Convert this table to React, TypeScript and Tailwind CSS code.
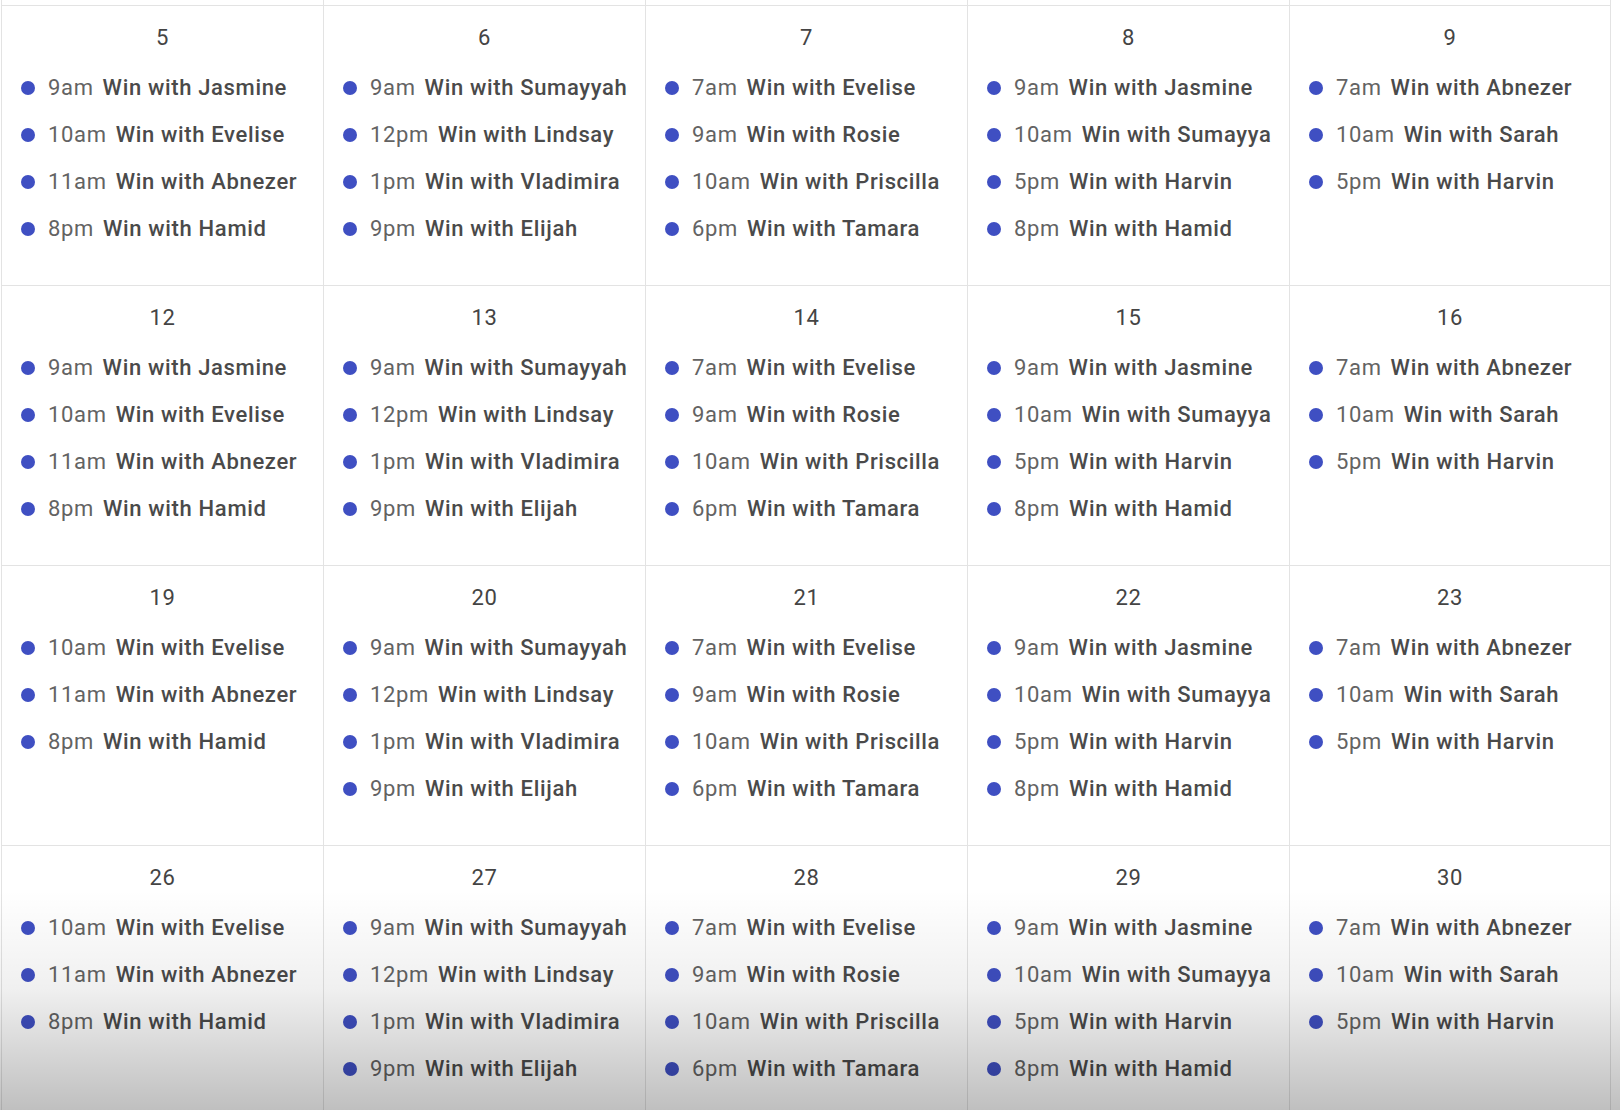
const col1a = [
  { time: "9am", name: "Jasmine" },
  { time: "10am", name: "Evelise" },
  { time: "11am", name: "Abnezer" },
  { time: "8pm", name: "Hamid" },
];
const col1b = col1a.slice(1);
const col2 = [
  { time: "9am", name: "Sumayyah" },
  { time: "12pm", name: "Lindsay" },
  { time: "1pm", name: "Vladimira" },
  { time: "9pm", name: "Elijah" },
];
const col3 = [
  { time: "7am", name: "Evelise" },
  { time: "9am", name: "Rosie" },
  { time: "10am", name: "Priscilla" },
  { time: "6pm", name: "Tamara" },
];
const col4 = [
  { time: "9am", name: "Jasmine" },
  { time: "10am", name: "Sumayya" },
  { time: "5pm", name: "Harvin" },
  { time: "8pm", name: "Hamid" },
];
const col5 = [
  { time: "7am", name: "Abnezer" },
  { time: "10am", name: "Sarah" },
  { time: "5pm", name: "Harvin" },
];

type Ev = { time: string; name: string };

const weeks: { day: number; events: Ev[] }[][] = [
  [
    { day: 5, events: col1a },
    { day: 6, events: col2 },
    { day: 7, events: col3 },
    { day: 8, events: col4 },
    { day: 9, events: col5 },
  ],
  [
    { day: 12, events: col1a },
    { day: 13, events: col2 },
    { day: 14, events: col3 },
    { day: 15, events: col4 },
    { day: 16, events: col5 },
  ],
  [
    { day: 19, events: col1b },
    { day: 20, events: col2 },
    { day: 21, events: col3 },
    { day: 22, events: col4 },
    { day: 23, events: col5 },
  ],
  [
    { day: 26, events: col1b },
    { day: 27, events: col2 },
    { day: 28, events: col3 },
    { day: 29, events: col4 },
    { day: 30, events: col5 },
  ],
];

const DayCell = ({ day, events, last }: { day: number; events: Ev[]; last: boolean }) => (
  <div className={`h-[280px] border-l border-t border-[#e3e3e3] pt-[9px] ${last ? "border-r" : ""}`}>
    <div className="h-[46px] mb-[3px] text-center text-[22px] leading-[46px] tracking-[0.03em] text-[#444]">{day}</div>
    {events.map((ev, i) => (
      <div key={i} className="flex h-[47px] items-center pl-[19px] text-[22px] tracking-[0.03em] whitespace-nowrap">
        <span className="size-[14px] shrink-0 rounded-full bg-[#3f4fc2]" />
        <span className="ml-[13px] text-[#636363]">{ev.time}</span>
        <span className="ml-[9px] font-medium text-[#4a4a4a]">Win with {ev.name}</span>
      </div>
    ))}
  </div>
);

export default function App() {
  return (
    <div
      className="relative h-[1110px] w-[1620px] overflow-hidden bg-white"
      style={{ fontFamily: "Roboto, 'Liberation Sans', sans-serif" }}
    >
      <div className="ml-px grid w-[1611px] grid-cols-[repeat(5,322px)]">
        {[0, 1, 2, 3, 4].map((i) => (
          <div key={i} className={`h-[5px] border-l border-[#e3e3e3] ${i === 4 ? "border-r" : ""}`} />
        ))}
        {weeks.map((week) =>
          week.map((cell, i) => <DayCell key={cell.day} day={cell.day} events={cell.events} last={i === 4} />)
        )}
      </div>
      <div className="pointer-events-none absolute inset-x-0 bottom-0 h-[220px] bg-linear-to-b from-transparent via-black/6 via-45% to-black/25" />
    </div>
  );
}
